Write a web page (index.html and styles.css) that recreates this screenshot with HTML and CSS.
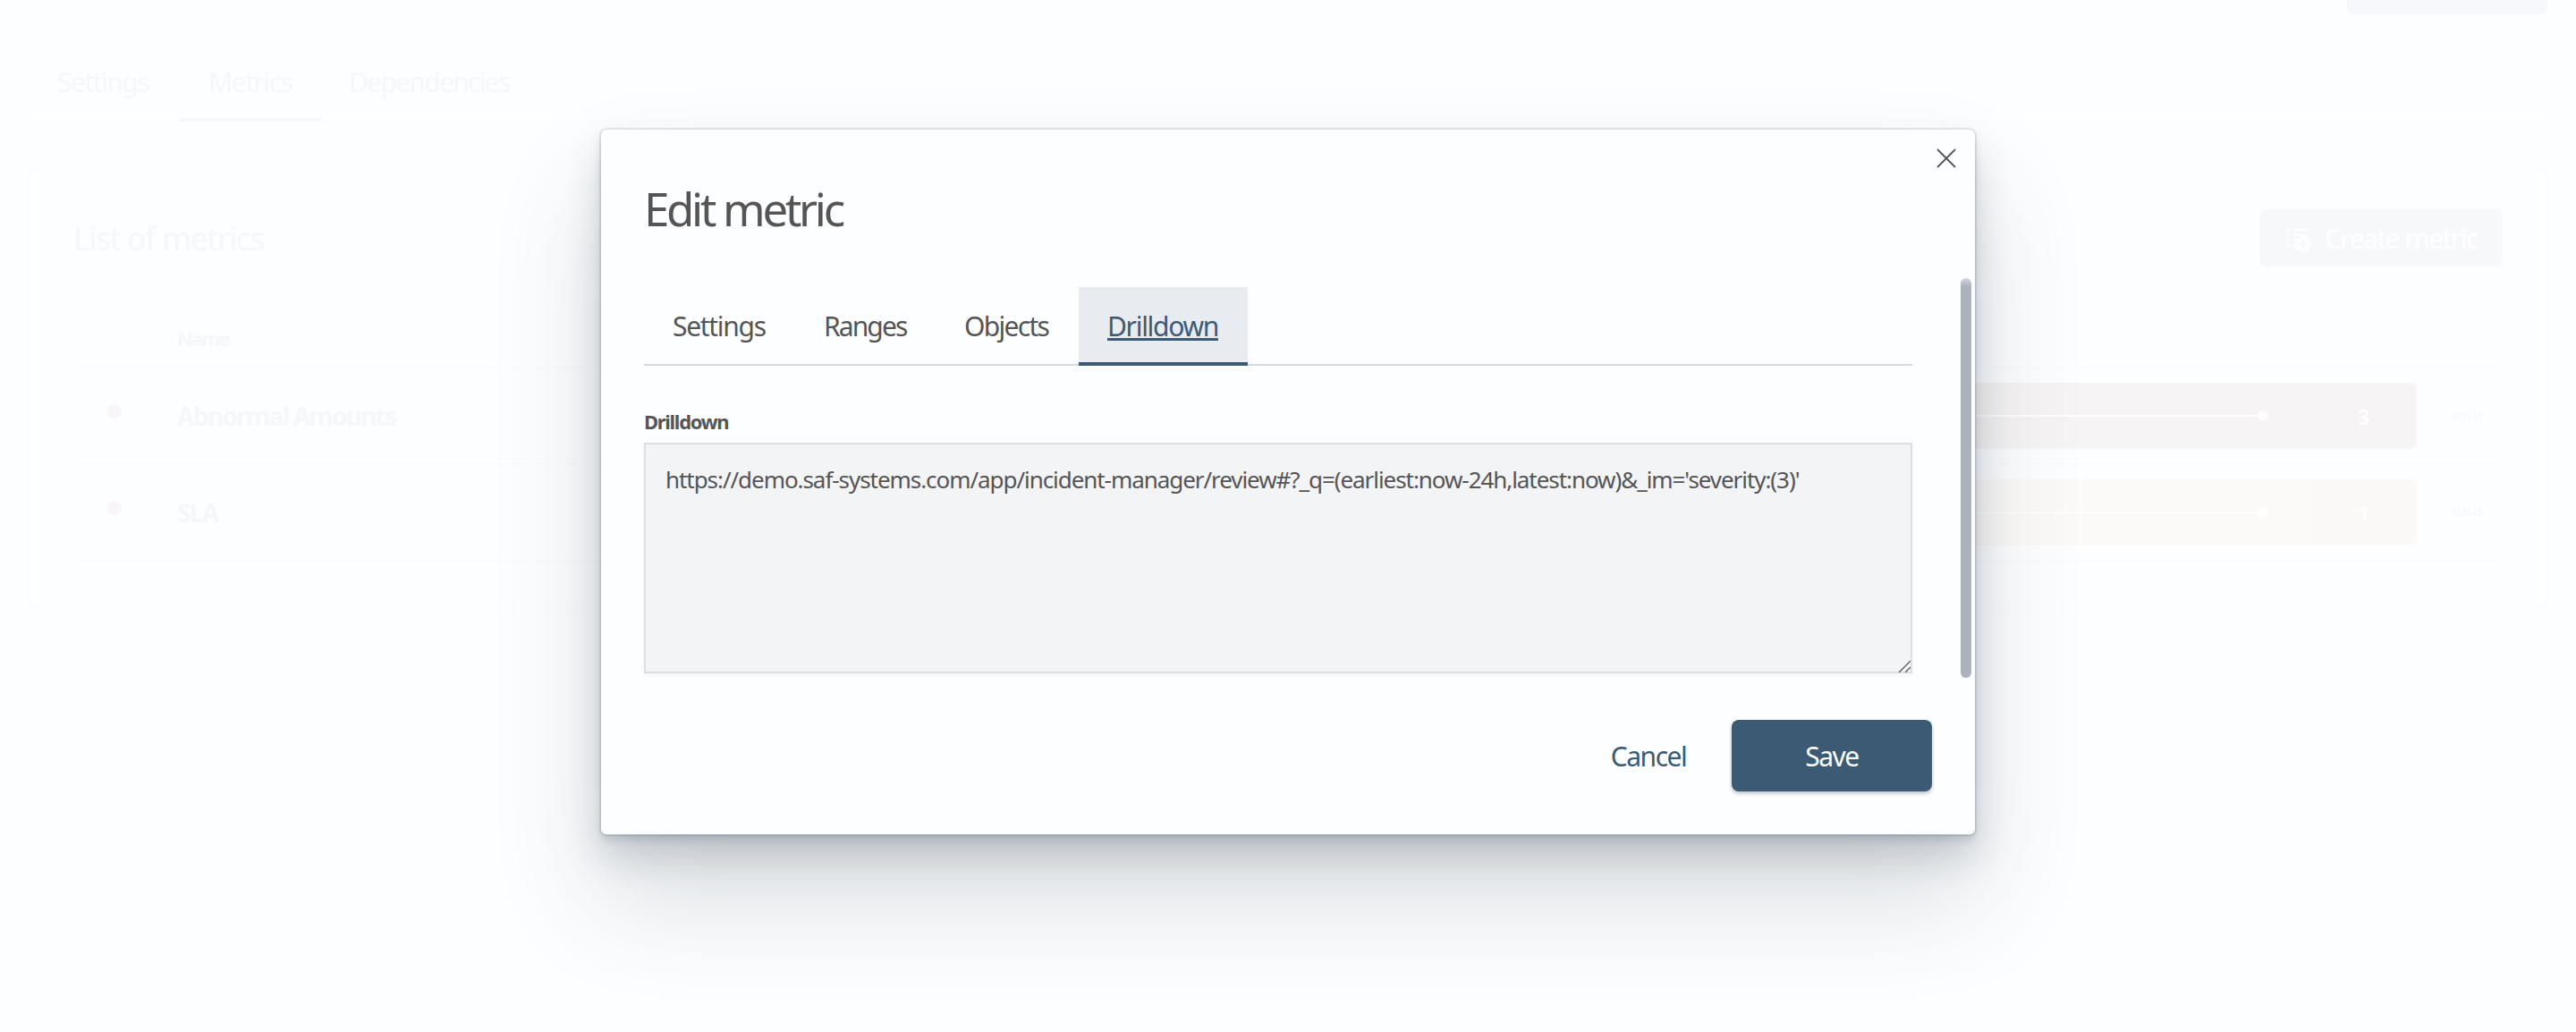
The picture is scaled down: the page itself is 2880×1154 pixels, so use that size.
FILE: index.html
```
<!DOCTYPE html>
<html lang="en">
<head>
    <meta charset="UTF-8">
    <title>Edit metric</title>
    <link rel="stylesheet" href="styles.css">
</head>
<body>
<div class="page">
    <div class="toolbar">
        <div class="toolbar-button"></div>
    </div>
    <nav class="page-tabs">
        <a class="page-tab">Settings</a>
        <a class="page-tab current">Metrics</a>
        <a class="page-tab wide">Dependencies</a>
    </nav>
    <section class="card">
        <div class="card-header">
            <h2 class="card-title">List of metrics</h2>
            <button class="create-button" type="button">
                <svg class="create-icon" width="28" height="26" viewBox="0 0 28 26">
                    <path d="M0 1h4M8 1h16M0 7h4M8 7h16M0 13h4M8 13h4M0 19h4M8 19h4" stroke="#fff" stroke-width="2" fill="none"/>
                    <circle cx="19" cy="17" r="9" fill="#fff"/>
                    <path d="M19 12v10M14 17h10" stroke="#f7f8fa" stroke-width="2"/>
                </svg>
                <span class="create-text">Create metric</span>
            </button>
        </div>
        <div class="table-head">Name</div>
        <div class="row">
            <span class="dot"></span>
            <span class="name">Abnormal Amounts</span>
            <div class="bar red"><i class="line"></i><i class="point"></i><span class="value">3</span></div>
            <div class="more"><i></i><i></i><i></i></div>
        </div>
        <div class="row">
            <span class="dot"></span>
            <span class="name">SLA</span>
            <div class="bar orange"><i class="line"></i><i class="point"></i><span class="value">1</span></div>
            <div class="more"><i></i><i></i><i></i></div>
        </div>
    </section>
</div>

<div class="overlay">
    <div class="modal">
        <button class="close" type="button">
            <svg width="22" height="22" viewBox="0 0 22 22"><path d="M1 1l20 20M21 1L1 21" stroke="#555" stroke-width="1.8" fill="none"/></svg>
        </button>
        <h1 class="modal-title">Edit metric</h1>
        <div class="modal-body">
            <div class="modal-content">
                <nav class="tabs">
                    <a class="tab t1">Settings</a>
                    <a class="tab t2">Ranges</a>
                    <a class="tab t3">Objects</a>
                    <a class="tab t4 active">Drilldown</a>
                </nav>
                <label class="label" for="drilldown">Drilldown</label>
                <div class="field">
                    <textarea id="drilldown" spellcheck="false">https://demo.saf-systems.com/app/incident-manager/review#?_q=(earliest:now-24h,latest:now)&amp;_im='severity:(3)'</textarea>
                    <svg class="grip" width="14" height="14" viewBox="0 0 14 14"><path d="M1 14L14 1M8 14l6-6" stroke="#666" stroke-width="1.5"/></svg>
                </div>
            </div>
            <div class="scrollbar"></div>
        </div>
        <div class="modal-footer">
            <button class="cancel" type="button">Cancel</button>
            <button class="save" type="button">Save</button>
        </div>
    </div>
</div>
</body>
</html>
```
FILE: styles.css
```
* {
    box-sizing: border-box;
}
body {
    margin: 0;
    height: 1154px;
    overflow: hidden;
    background: #fdfeff;
    font-family: "Noto Sans", "Open Sans", sans-serif;
    color: #555;
}
button {
    border: none;
    padding: 0;
    background: none;
    font: inherit;
    letter-spacing: inherit;
}
.page {
    height: 1154px;
    padding: 0 32px;
    color: #f6f7fa;
}
.toolbar {
    height: 48px;
    display: flex;
    justify-content: flex-end;
}
.toolbar-button {
    width: 224px;
    height: 16px;
    background: #f7f8fb;
    border-radius: 0 0 8px 8px;
}
.page-tabs {
    display: flex;
    height: 88px;
    border-bottom: 2px solid #fbfcfd;
}
.page-tab {
    height: 88px;
    width: 169px;
    padding-left: 32px;
    font-size: 30px;
    line-height: 88px;
    letter-spacing: -1.5px;
}
.page-tab.current {
    width: 157px;
    border-bottom: 4px solid #f6f7fa;
}
.page-tab.wide {
    width: 260px;
    letter-spacing: -1.7px;
}
.card {
    margin-top: 47px;
    height: 498px;
    padding: 49px 48px 0;
    border: 2px solid #fbfcfd;
    border-radius: 8px;
}
.card-header {
    display: flex;
    justify-content: space-between;
    height: 64px;
}
.card-title {
    margin: 0;
    font-size: 36px;
    font-weight: 400;
    line-height: 66px;
    letter-spacing: -1.6px;
}
.create-button {
    width: 272px;
    height: 64px;
    padding-left: 30px;
    display: flex;
    align-items: center;
    background: #f7f8fa;
    border-radius: 8px;
    color: #fff;
    font-size: 30px;
    letter-spacing: -1.5px;
}
.create-icon {
    flex: none;
    margin-right: 15px;
    margin-top: 5px;
}
.create-text {
    white-space: nowrap;
}
.table-head {
    height: 114px;
    padding: 65px 0 0 116px;
    border-bottom: 2px solid #fbfcfd;
    font-size: 22px;
    font-weight: 700;
    line-height: 30px;
    letter-spacing: -2px;
}
.row {
    height: 108px;
    display: flex;
    align-items: center;
    border-bottom: 2px solid #fbfcfd;
}
.dot {
    width: 16px;
    height: 16px;
    margin: 0 62px 10px 38px;
    border-radius: 50%;
    background: #faf5f6;
}
.name {
    width: 1384px;
    font-size: 28px;
    font-weight: 700;
    letter-spacing: -1.7px;
}
.bar {
    width: 1120px;
    height: 74px;
    display: flex;
    align-items: center;
    border-radius: 8px;
    color: #fff;
}
.red {
    background: #f7f4f5;
}
.orange {
    background: linear-gradient(90deg, #fcfaf8 1000px, #fbf9f7 1000px);
}
.line {
    width: 942px;
    height: 2px;
    background: #fff;
}
.point {
    width: 12px;
    height: 12px;
    border-radius: 50%;
    background: #fff;
}
.value {
    margin-left: 100px;
    font-size: 24px;
    font-weight: 700;
}
.more {
    display: flex;
    gap: 4px;
    margin-left: 40px;
}
.more i {
    width: 8px;
    height: 8px;
    border: 2px solid #f8f9fc;
}

.overlay {
    position: absolute;
    inset: 0;
    padding-top: 145px;
    display: flex;
    justify-content: center;
    align-items: flex-start;
}
.modal {
    position: relative;
    width: 1536px;
    height: 788px;
    background: #fdfeff;
    border-radius: 6px;
    box-shadow: 0 0 0 2px rgba(60, 70, 85, .11), 0 6px 8px rgba(50, 65, 85, .16), 0 24px 40px rgba(50, 65, 85, .19), 0 70px 120px rgba(50, 65, 85, .18);
}
.close {
    position: absolute;
    top: 21px;
    right: 21px;
    width: 22px;
    height: 22px;
    line-height: 0;
}
.modal-title {
    margin: 0;
    height: 166px;
    padding: 53px 0 0 48px;
    font-size: 51px;
    font-weight: 400;
    line-height: 70px;
    letter-spacing: -3.3px;
}
.modal-body {
    display: flex;
    height: 447px;
    padding: 0 4px 0 48px;
}
.modal-content {
    width: 1418px;
    padding-top: 10px;
}
.tabs {
    display: flex;
    height: 88px;
    border-bottom: 2px solid #d5d8dc;
}
.tab {
    height: 88px;
    padding-left: 32px;
    font-size: 30px;
    line-height: 88px;
    letter-spacing: -1.3px;
}
.t1 {
    width: 169px;
}
.t2 {
    width: 157px;
    letter-spacing: -1.9px;
}
.t3 {
    width: 160px;
    letter-spacing: -1.7px;
}
.t4 {
    width: 189px;
}
.active {
    background: #e8ebf0;
    border-bottom: 4px solid #3c5a75;
    color: #3c5a75;
    text-decoration: underline;
    text-decoration-thickness: 3px;
    text-underline-offset: 2px;
}
.label {
    display: block;
    margin: 47px 0 9px;
    font-size: 22px;
    font-weight: 700;
    line-height: 30px;
    letter-spacing: -1.3px;
}
.field {
    position: relative;
    height: 258px;
}
.field textarea {
    display: block;
    width: 100%;
    height: 258px;
    padding: 21px 22px;
    border: 2px solid #dde0e3;
    border-radius: 0;
    background: #f3f4f6;
    box-shadow: 0 2px 4px rgba(50, 65, 85, .06);
    color: #555;
    font: inherit;
    font-size: 26px;
    line-height: 37px;
    letter-spacing: -1.06px;
    resize: none;
    overflow: hidden;
    outline: none;
}
.grip {
    position: absolute;
    right: 2px;
    bottom: 1px;
}
.scrollbar {
    width: 12px;
    height: 447px;
    margin-left: auto;
    border-radius: 6px;
    background: linear-gradient(#d0d6dc, #abb2b9 10px);
}
.modal-footer {
    display: flex;
    justify-content: flex-end;
    padding: 47px 48px 0 0;
    font-size: 30px;
    letter-spacing: -1.5px;
}
.cancel {
    width: 86px;
    margin-right: 50px;
    color: #3c5a75;
}
.save {
    width: 224px;
    height: 80px;
    background: #3c5a73;
    border-radius: 8px;
    box-shadow: 0 2px 4px rgba(50, 65, 85, .35);
    color: #fff;
}
```
